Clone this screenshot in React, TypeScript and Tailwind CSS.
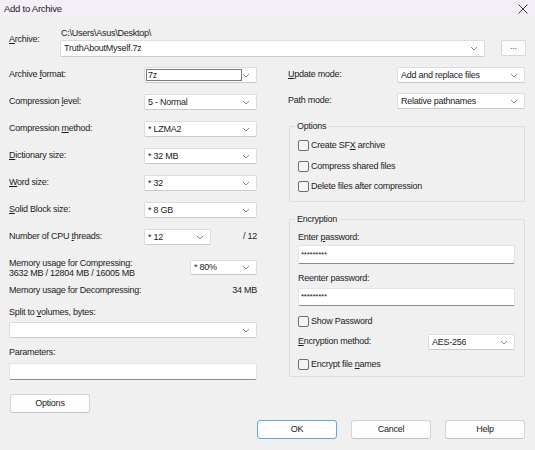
import React from "react";

const font = "font-['Liberation_Sans',Arial,sans-serif] text-[9px] tracking-[-0.25px] text-[#1b1b1b]";

function Chevron() {
  return (
    <svg width="8" height="5" viewBox="0 0 8 5" className="shrink-0">
      <path d="M1 1 L4 4 L7 1" fill="none" stroke="#7d7d7d" strokeWidth="0.9" />
    </svg>
  );
}

function Combo({ w, h = 16, value, children }: { w: string; h?: number; value?: string; children?: React.ReactNode }) {
  return (
    <div
      className={`${w} flex shrink-0 items-center justify-between rounded-[2px] border border-[#dcdcdc] border-b-[#c9c9c9] bg-white pl-[3px] pr-[6px]`}
      style={{ height: h }}
    >
      {children ?? <span className="truncate leading-none">{value}</span>}
      <Chevron />
    </div>
  );
}

function Row({ label, combo }: { label: React.ReactNode; combo: React.ReactNode }) {
  return (
    <div className="flex h-[16px] items-center justify-between">
      <span>{label}</span>
      {combo}
    </div>
  );
}

function U({ children }: { children: React.ReactNode }) {
  return <span className="underline underline-offset-[1px]">{children}</span>;
}

function Check({ label, className = "" }: { label: React.ReactNode; className?: string }) {
  return (
    <div className={`flex h-[13px] items-center gap-[2px] ${className}`}>
      <span className="h-[11px] w-[11px] rounded-[2px] border border-[#6e6e6e] bg-[#f5f5f5]" />
      <span>{label}</span>
    </div>
  );
}

function Edit({ h, value }: { h: number; value?: string }) {
  return (
    <div
      className="flex w-full items-center rounded-[2px] border border-[#e3e3e3] border-b-[#8c8c8c] bg-white px-[2px] text-[8px] leading-none"
      style={{ height: h }}
    >
      {value}
    </div>
  );
}

function Button({ children, primary }: { children: React.ReactNode; primary?: boolean }) {
  return (
    <div
      className={`flex h-[19px] w-[80px] items-center justify-center rounded-[3px] bg-[#fdfdfd] ${
        primary ? "border-[1.5px] border-[#62a4e4]" : "border border-[#d3d3d3] border-b-[#c2c2c2]"
      }`}
    >
      {children}
    </div>
  );
}

export default function App() {
  return (
    <div className={`h-[450px] w-[535px] overflow-hidden bg-[#f0f0f0] ${font}`}>
      {/* title bar */}
      <div className="flex h-[18px] items-center justify-between bg-[#f4eef6] pl-[4px] pr-[7px]">
        <span className="text-[9.5px]">Add to Archive</span>
        <svg width="10" height="10" viewBox="0 0 10 10">
          <path d="M0.5 0.5 L9.5 9.5 M9.5 0.5 L0.5 9.5" stroke="#222" strokeWidth="0.9" />
        </svg>
      </div>

      <div className="pl-[9px] pr-[9px]">
        {/* archive */}
        <div className="flex pt-[9px]">
          <span className="w-[51px] pt-[6px]">
            <U>A</U>rchive:
          </span>
          <div className="flex flex-col">
            <span className="h-[13px] pl-[1px] leading-[12px]">C:\Users\Asus\Desktop\</span>
            <div className="flex items-start">
              <Combo w="w-[425px]" h={17} value="TruthAboutMyself.7z" />
              <div className="ml-[16px] flex h-[16px] w-[25px] items-center justify-center rounded-[2px] border border-[#d8d8d8] bg-[#fbfbfb] pb-[3px] text-[#555]">
                ...
              </div>
            </div>
          </div>
        </div>

        {/* main */}
        <div className="mt-[10px] flex gap-[31px]">
          {/* left */}
          <div className="flex w-[248px] flex-col">
            <div className="flex flex-col gap-[11px]">
              <Row
                label={
                  <>
                    Archive <U>f</U>ormat:
                  </>
                }
                combo={
                  <Combo w="w-[113px]">
                    <div className="-ml-[2px] flex h-[12px] w-[97px] items-center border border-[#7a7a7a] px-[1px] leading-none">7z</div>
                  </Combo>
                }
              />
              <Row
                label={
                  <>
                    Compression <U>l</U>evel:
                  </>
                }
                combo={<Combo w="w-[113px]" value="5 - Normal" />}
              />
              <Row
                label={
                  <>
                    Compression <U>m</U>ethod:
                  </>
                }
                combo={<Combo w="w-[113px]" value="*  LZMA2" />}
              />
              <Row
                label={
                  <>
                    <U>D</U>ictionary size:
                  </>
                }
                combo={<Combo w="w-[113px]" value="*  32 MB" />}
              />
              <Row
                label={
                  <>
                    <U>W</U>ord size:
                  </>
                }
                combo={<Combo w="w-[113px]" value="*  32" />}
              />
              <Row
                label={
                  <>
                    <U>S</U>olid Block size:
                  </>
                }
                combo={<Combo w="w-[113px]" value="*  8 GB" />}
              />
              <div className="flex h-[16px] items-center">
                <span className="w-[135px]">
                  Number of CPU <U>t</U>hreads:
                </span>
                <Combo w="w-[67px]" value="*  12" />
                <span className="ml-auto">/ 12</span>
              </div>
            </div>

            <div className="mt-[13px] flex items-start justify-between">
              <div className="flex flex-col leading-[10px]">
                <span>Memory usage for Compressing:</span>
                <span>3632 MB / 12804 MB / 16005 MB</span>
              </div>
              <div className="mt-[2px]">
                <Combo w="w-[67px]" h={15} value="*  80%" />
              </div>
            </div>

            <div className="mt-[7px] flex h-[12px] items-center justify-between">
              <span>Memory usage for Decompressing:</span>
              <span>34 MB</span>
            </div>

            <span className="mt-[9px] h-[12px] leading-[12px]">
              Split to <U>v</U>olumes, bytes:
            </span>
            <div className="mt-[4px]">
              <Combo w="w-[248px]" value="" />
            </div>

            <span className="mt-[8px] h-[12px] leading-[12px]">Parameters:</span>
            <div className="mt-[5px]">
              <Edit h={17} />
            </div>

            <div className="ml-[1px] mt-[14px]">
              <Button>Options</Button>
            </div>
          </div>

          {/* right */}
          <div className="flex w-[237px] flex-col">
            <div className="flex flex-col gap-[10px]">
              <div className="flex h-[16px] items-center justify-between">
                <span>
                  <U>U</U>pdate mode:
                </span>
                <Combo w="w-[128px]" value="Add and replace files" />
              </div>
              <div className="flex h-[16px] items-center justify-between">
                <span>Path mode:</span>
                <Combo w="w-[128px]" value="Relative pathnames" />
              </div>
            </div>

            <fieldset className="ml-[1px] mt-[11px] h-[82px] w-[236px] rounded-[2px] border border-[#dcdcdc] pl-[8px]">
              <legend className="ml-[-3px] h-[12px] px-[2px] leading-[12px]">Options</legend>
              <Check
                className="mt-[7px]"
                label={
                  <>
                    Create SF<U>X</U> archive
                  </>
                }
              />
              <Check className="mt-[8px]" label="Compress shared files" />
              <Check className="mt-[7px]" label="Delete files after compression" />
            </fieldset>

            <fieldset className="ml-[1px] mt-[11px] h-[164px] w-[236px] rounded-[2px] border border-[#dcdcdc] pl-[8px] pr-[9px]">
              <legend className="ml-[-3px] h-[12px] px-[2px] leading-[12px]">Encryption</legend>
              <div className="mt-[6px] h-[12px] leading-[12px]">
                Enter <U>p</U>assword:
              </div>
              <div className="mt-[2px]">
                <Edit h={19} value="*********" />
              </div>
              <div className="mt-[8px] h-[12px] leading-[12px]">Reenter password:</div>
              <div className="mt-[4px]">
                <Edit h={18} value="*********" />
              </div>
              <Check className="mt-[9px]" label="Show Password" />
              <div className="mt-[6px] flex h-[16px] items-center justify-between">
                <span>
                  <U>E</U>ncryption method:
                </span>
                <Combo w="w-[87px]" value="AES-256" />
              </div>
              <Check
                className="mt-[8px]"
                label={
                  <>
                    Encrypt file <U>n</U>ames
                  </>
                }
              />
            </fieldset>
          </div>
        </div>

        {/* footer */}
        <div className="mt-[7px] flex justify-end gap-[14px] pr-[1px]">
          <Button primary>OK</Button>
          <Button>Cancel</Button>
          <Button>Help</Button>
        </div>
      </div>
    </div>
  );
}
